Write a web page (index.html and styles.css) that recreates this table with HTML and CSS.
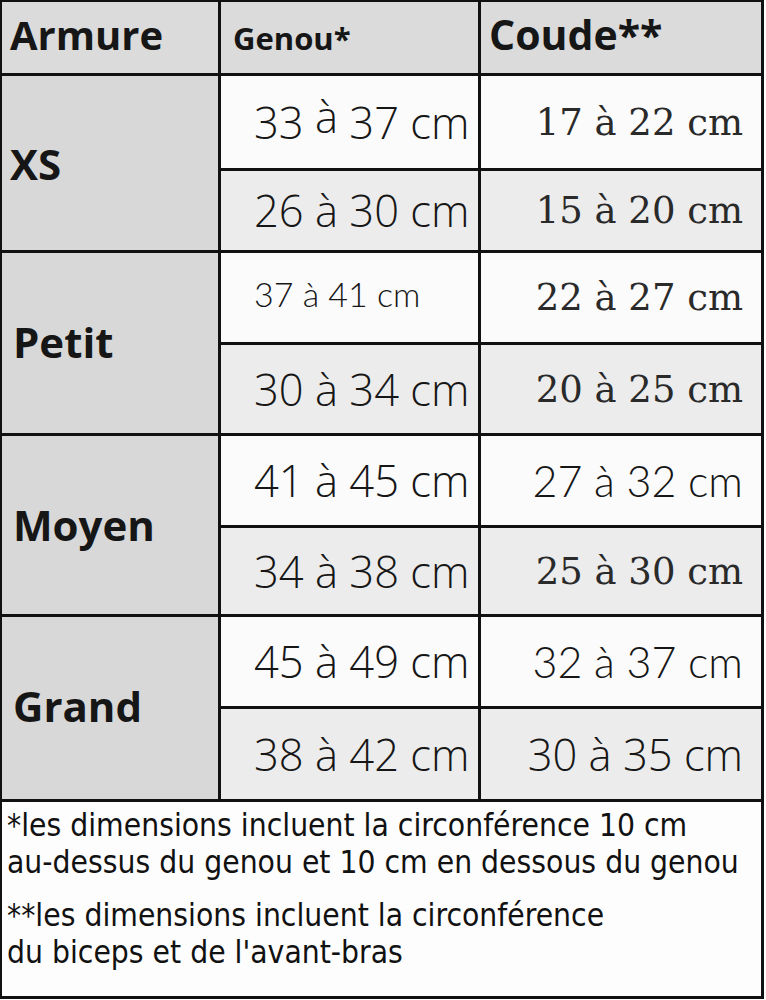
FILE: index.html
```html
<!DOCTYPE html>
<html lang="fr">
<head>
<meta charset="utf-8">
<title>Tableau des tailles</title>
<link rel="stylesheet" href="styles.css">
</head>
<body>
<div class="sheet">
  <div class="grid">
    <div class="cell head h1">Armure</div>
    <div class="cell head h2">Genou*</div>
    <div class="cell head h3">Coude**</div>

    <div class="cell size r1">XS</div>
    <div class="cell val a g"><span>33 <span class="up">à</span> 37 cm</span></div>
    <div class="cell val a c serif">17 à 22 cm</div>
    <div class="cell val b g">26 à 30 cm</div>
    <div class="cell val b c serif">15 à 20 cm</div>

    <div class="cell size r2">Petit</div>
    <div class="cell val a g small">37 à 41 cm</div>
    <div class="cell val a c serif">22 à 27 cm</div>
    <div class="cell val b g">30 à 34 cm</div>
    <div class="cell val b c serif">20 à 25 cm</div>

    <div class="cell size r3">Moyen</div>
    <div class="cell val a g">41 à 45 cm</div>
    <div class="cell val a c thin">27 à 32 cm</div>
    <div class="cell val b g">34 à 38 cm</div>
    <div class="cell val b c serif">25 à 30 cm</div>

    <div class="cell size r4">Grand</div>
    <div class="cell val a g">45 à 49 cm</div>
    <div class="cell val a c thin">32 à 37 cm</div>
    <div class="cell val b g">38 à 42 cm</div>
    <div class="cell val b c">30 à 35 cm</div>

    <div class="cell notes">
      <p>*les dimensions incluent la circonférence 10 cm<br>au-dessus du genou et 10 cm en dessous du genou</p>
      <p>**les dimensions incluent la circonférence<br>du biceps et de l'avant-bras</p>
    </div>
  </div>
</div>
</body>
</html>
```

FILE: styles.css
```css
* { box-sizing: border-box; }
html, body {
  margin: 0;
  padding: 0;
  background: #ffffff;
}
.sheet {
  width: 766px;
  height: 1000px;
  background: #ffffff;
}
.grid {
  width: 764px;
  height: 999px;
  background: #111111;
  padding: 2px 3px 3px 2px;
  display: grid;
  grid-template-columns: 216px 257px 280px;
  grid-template-rows: 71px 92px 79px 89px 88px 89px 86px 89px 90px 194px;
  column-gap: 3px;
  row-gap: 3px;
}
.cell {
  display: flex;
  align-items: center;
  color: #161616;
  font-family: "Open Sans", "DejaVu Sans", sans-serif;
}
.head {
  background: #dbdbdb;
  font-weight: 700;
  align-items: flex-start;
}
.h1 { font-size: 40px; padding: 5px 0 0 8px; }
.h2 { font-size: 31px; padding: 15px 0 0 12px; }
.h3 { font-size: 41px; padding: 4px 0 0 8px; }

.size {
  background: #d8d8d8;
  font-weight: 700;
  font-size: 42px;
  padding-left: 8px;
}
.r1 { grid-row: 2 / span 2; padding-top: 0; }
.r2 { grid-row: 4 / span 2; padding-left: 11px; padding-bottom: 4px; }
.r3 { grid-row: 6 / span 2; padding-left: 11px; padding-bottom: 2px; }
.r4 { grid-row: 8 / span 2; padding-left: 11px; padding-bottom: 6px; }

.val {
  font-weight: 300;
  font-size: 43.5px;
  white-space: nowrap;
}
.a { background: #fbfbfb; }
.b { background: #ececec; }
.g { padding-left: 33px; }
.c { justify-content: flex-end; padding-right: 18px; }
.up { position: relative; top: -6px; }
.small {
  font-family: "Lato", "Open Sans", sans-serif;
  font-size: 34px;
  padding-bottom: 8px;
}
.serif {
  font-family: "DejaVu Serif", "Liberation Serif", serif;
  font-weight: 400;
  font-size: 37px;
  color: #2a2a2a;
}
.thin {
  font-family: "Lato", "Open Sans", sans-serif;
  font-weight: 300;
  font-size: 43px;
}
.notes {
  grid-column: 1 / span 3;
  background: #fdfdfd;
  display: block;
  padding: 5px 0 0 5px;
  font-family: "DejaVu Sans Condensed", "DejaVu Sans", sans-serif;
  font-stretch: condensed;
  font-size: 31.5px;
  line-height: 37px;
  color: #111111;
}
.notes p { margin: 0 0 16px 0; }
```
